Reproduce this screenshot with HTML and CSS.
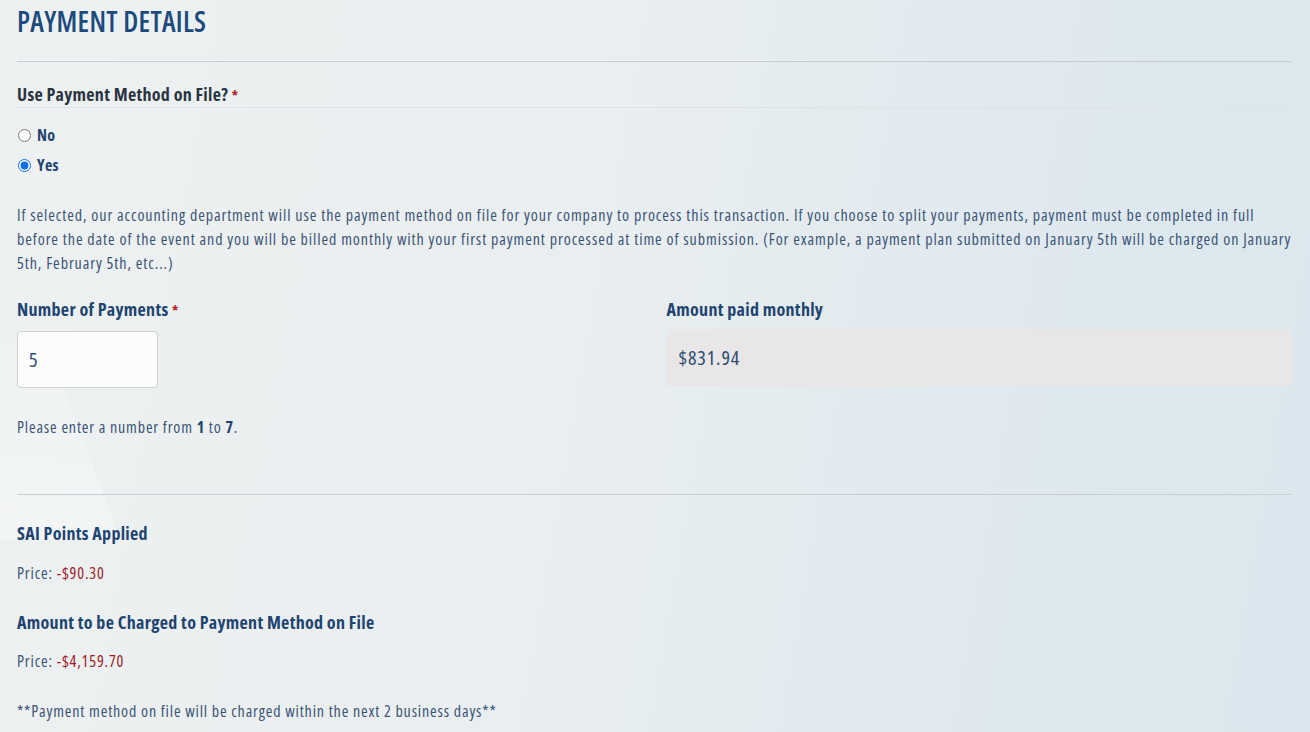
FILE: index.html
```html
<!DOCTYPE html>
<html>
<head>
<meta charset="utf-8">
<link rel="stylesheet" href="styles.css">
</head>
<body>
<div class="bg-shape"></div>
<main class="page">
  <h2 class="title">PAYMENT DETAILS</h2>
  <hr class="rule">
  <fieldset class="group">
    <legend class="label dark">Use Payment Method on File? <span class="req">*</span></legend>
    <label class="radio"><input type="radio" name="pm"> <span>No</span></label>
    <label class="radio"><input type="radio" name="pm" checked> <span>Yes</span></label>
  </fieldset>
  <p class="text para">If selected, our accounting department will use the payment method on file for your company to process this transaction. If you choose to split your payments, payment must be completed in full before the date of the event and you will be billed monthly with your first payment processed at time of submission. (For example, a payment plan submitted on January 5th will be charged on January 5th, February 5th, etc...)</p>
  <div class="row">
    <div class="col">
      <div class="label">Number of Payments <span class="req">*</span></div>
      <div class="input">5</div>
      <p class="text hint">Please enter a number from <b>1</b> to <b>7</b>.</p>
    </div>
    <div class="col">
      <div class="label">Amount paid monthly</div>
      <div class="input readonly">$831.94</div>
    </div>
  </div>
  <hr class="rule rule2">
  <div class="label sum">SAI Points Applied</div>
  <p class="text price">Price: <span class="neg">-$90.30</span></p>
  <div class="label sum">Amount to be Charged to Payment Method on File</div>
  <p class="text price">Price: <span class="neg">-$4,159.70</span></p>
  <p class="text note">**Payment method on file will be charged within the next 2 business days**</p>
</main>
</body>
</html>
```
FILE: styles.css
```css
html, body {
  margin: 0;
  padding: 0;
  height: 732px;
  overflow: hidden;
}
body {
  font-family: "Open Sans", "DejaVu Sans Condensed", sans-serif;
  font-stretch: 75%;
  background: linear-gradient(100deg, #eef1f1 0%, #e9eef0 45%, #dfe9ef 75%, #dbe7ee 100%);
  color: #3b5577;
  position: relative;
}
.bg-shape {
  position: absolute;
  left: 0;
  top: 260px;
  width: 120px;
  height: 280px;
  background: linear-gradient(180deg, rgba(255,255,255,0.0), rgba(255,255,255,0.35));
  clip-path: polygon(0 0, 40% 30%, 100% 100%, 0 100%);
  pointer-events: none;
}
.page {
  position: relative;
  padding: 0 18px 0 17px;
}
.title {
  margin: 0;
  padding-top: 5px;
  font-size: 28px;
  line-height: 32px;
  font-weight: 600;
  color: #1c4a7c;
  letter-spacing: 0.3px;
}
.rule {
  border: 0;
  border-top: 1px solid #c9cdd0;
  margin: 24px 0 0 0;
}
.group {
  border: 0;
  padding: 0;
  margin: 21px 0 0 0;
}
.label {
  font-size: 18px;
  font-weight: 700;
  line-height: 22px;
  letter-spacing: 0.3px;
  color: #1e4470;
}
.label.dark {
  color: #2a3441;
  padding: 0;
  width: 100%;
  border-bottom: 1px solid #dfe2e4;
}
.req {
  color: #b0211d;
  font-size: 14px;
}
.radio {
  display: flex;
  align-items: center;
  gap: 6px;
  font-size: 16px;
  font-weight: 700;
  letter-spacing: 0.3px;
  color: #1e4470;
  height: 30px;
}
.radio input {
  margin: 0 0 0 1px;
  width: 13px;
  height: 13px;
  accent-color: #0b6ff0;
}
.radio:first-of-type { margin-top: 12px; }
.text {
  font-size: 16px;
  line-height: 24px;
  letter-spacing: 0.85px;
  color: #3b5577;
  margin: 0;
}
.para {
  margin-top: 23px;
  letter-spacing: 0.92px;
}
.row {
  display: grid;
  grid-template-columns: 1fr 1fr;
  column-gap: 24px;
  margin-top: 23px;
}
.input {
  margin-top: 9px;
  width: 141px;
  height: 57px;
  box-sizing: border-box;
  border: 1px solid #cfd2d4;
  border-radius: 4px;
  background: #fcfcfc;
  font-size: 20px;
  line-height: 55px;
  letter-spacing: 0.9px;
  padding-left: 11px;
  color: #2d4b72;
}
.input.readonly {
  width: 100%;
  background: #e8e6e6;
  border-color: #e8e6e6;
}
.hint {
  margin-top: 27px;
}
.hint b { color: #1e4470; }
.rule2 { margin-top: 55px; }
.sum { margin-top: 27px; }
.price { margin-top: 17px; }
.price + .sum { margin-top: 26px; }
.sum + .price + .sum + .price { margin-top: 16px; }
.neg { color: #9b1a1f; }
.note { margin-top: 26px; }
```
